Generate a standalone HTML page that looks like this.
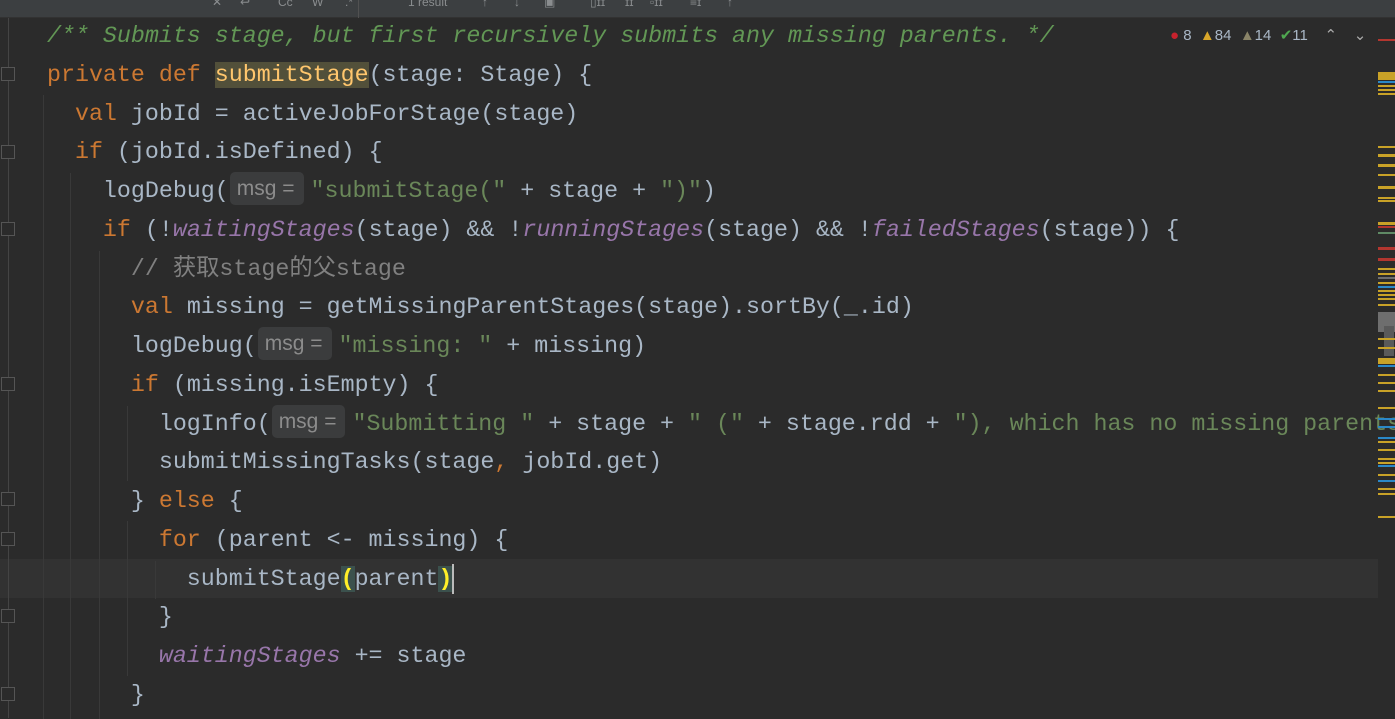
<!DOCTYPE html>
<html><head><meta charset="utf-8"><style>
*{margin:0;padding:0;box-sizing:border-box}
body{width:1395px;height:718px;background:#2b2b2b;overflow:hidden;position:relative;font-family:"Liberation Mono","Noto Sans CJK SC",monospace;font-size:23.3px;color:#a9b7c6}
.tb{position:absolute;left:0;top:0;width:1395px;height:18px;background:#3c3f41;border-bottom:1px solid #323232;color:#8a8d8f;font-family:"Liberation Sans",sans-serif;font-size:12px}
.tb span{position:absolute;top:-5px}
.l{position:absolute;left:47px;height:39px;line-height:39px;white-space:pre}
.k{color:#cc7832}.s{color:#6a8759}.c{color:#629755;font-style:italic}.lc{color:#808080}.p{color:#9876aa;font-style:italic}
.fn{color:#ffc66d;background:#52503a}
.h{display:inline-block;background:#3b3c3d;color:#8c8c8c;font-family:"Liberation Sans",sans-serif;font-size:21px;border-radius:5px;height:33px;line-height:33px;padding:0 9px 0 7px;margin:0 7px 0 1px;vertical-align:middle;position:relative;top:-2px}
.pm{background:#3b514d;color:#ffef28;font-weight:bold}
.g{position:absolute;width:1px;background:#393939}
.cur{position:absolute;left:0;top:559px;width:1378px;height:39px;background:#323232}
.st{position:absolute;left:1378px;width:17px;height:2px}
.y{background:#c9a227}.b{background:#2a88c8}.r{background:#b3362f}.gr{background:#5f8a65}.gy{background:#6e6e6e}
.fold{position:absolute;left:1px;width:14px;height:14px;border:1px solid #555;background:#2b2b2b}
</style></head><body>
<div class="tb"><span style="left:212px">✕</span><span style="left:240px">↩</span><span style="left:278px">Cc</span><span style="left:312px">W</span><span style="left:345px">.*</span><span style="left:408px">1 result</span><span style="left:482px">↑</span><span style="left:514px">↓</span><span style="left:544px">▣</span><span style="left:590px">▯ɪɪ</span><span style="left:625px">ɪɪ</span><span style="left:650px">▫ɪɪ</span><span style="left:690px">≡ɪ</span><span style="left:727px">↑</span></div>
<div style="position:absolute;left:358px;top:0;width:1px;height:18px;background:#515151"></div>
<div class="cur"></div>
<div style="position:absolute;left:8px;top:18px;width:1px;height:700px;background:#444"></div>
<div class="g" style="left:43px;top:95px;height:624px"></div>
<div class="g" style="left:70px;top:173px;height:546px"></div>
<div class="g" style="left:99px;top:251px;height:468px"></div>
<div class="g" style="left:127px;top:406px;height:75px"></div>
<div class="g" style="left:127px;top:521px;height:155px"></div>
<div class="g" style="left:155px;top:561px;height:38px"></div>
<div class="fold" style="top:67px"></div><div class="fold" style="top:145px"></div><div class="fold" style="top:222px"></div><div class="fold" style="top:377px"></div><div class="fold" style="top:492px"></div><div class="fold" style="top:532px"></div><div class="fold" style="top:609px"></div><div class="fold" style="top:687px"></div>

<div class="l" style="top:17px"><span class="c">/** Submits stage, but first recursively submits any missing parents. */</span></div>
<div class="l" style="top:56px"><span class="k">private def </span><span class="fn">submitStage</span>(stage: Stage) {</div>
<div class="l" style="top:95px">  <span class="k">val </span>jobId = activeJobForStage(stage)</div>
<div class="l" style="top:133px">  <span class="k">if </span>(jobId.isDefined) {</div>
<div class="l" style="top:172px">    logDebug(<span class="h">msg =</span><span class="s">"submitStage("</span> + stage + <span class="s">")"</span>)</div>
<div class="l" style="top:211px">    <span class="k">if </span>(!<span class="p">waitingStages</span>(stage) &amp;&amp; !<span class="p">runningStages</span>(stage) &amp;&amp; !<span class="p">failedStages</span>(stage)) {</div>
<div class="l" style="top:250px">      <span class="lc">// 获取stage的父stage</span></div>
<div class="l" style="top:288px">      <span class="k">val </span>missing = getMissingParentStages(stage).sortBy(_.id)</div>
<div class="l" style="top:327px">      logDebug(<span class="h">msg =</span><span class="s">"missing: "</span> + missing)</div>
<div class="l" style="top:366px">      <span class="k">if </span>(missing.isEmpty) {</div>
<div class="l" style="top:405px">        logInfo(<span class="h">msg =</span><span class="s">"Submitting "</span> + stage + <span class="s">" ("</span> + stage.rdd + <span class="s">"), which has no missing parents"</span>)</div>
<div class="l" style="top:443px">        submitMissingTasks(stage<span class="k">, </span>jobId.get)</div>
<div class="l" style="top:482px">      } <span class="k">else </span>{</div>
<div class="l" style="top:521px">        <span class="k">for </span>(parent &lt;- missing) {</div>
<div class="l" style="top:560px">          submitStage<span class="pm">(</span>parent<span class="pm">)</span><span style="display:inline-block;width:2px;height:30px;background:#bbb;vertical-align:middle"></span></div>
<div class="l" style="top:598px">        }</div>
<div class="l" style="top:637px">        <span class="p">waitingStages</span> += stage</div>
<div class="l" style="top:676px">      }</div>

<div style="position:absolute;left:1160px;top:18px;width:235px;height:36px;background:#2b2b2b"></div>
<div style="position:absolute;left:1170px;top:26px;font-family:'Liberation Sans',sans-serif;font-size:15px;color:#a9b7c6;white-space:pre"><span style="color:#c7222d">●</span> 8  <span style="color:#d9a72a">▲</span>84  <span style="color:#8a8468">▲</span>14  <span style="color:#4fa850">✔</span>11    <span style="color:#aaa">⌃</span>    <span style="color:#aaa">⌄</span></div>

<div class="st r" style="top:39px"></div>
<div class="st y" style="top:72px;height:8px"></div><div class="st b" style="top:81px"></div><div class="st y" style="top:85px"></div><div class="st y" style="top:89px"></div><div class="st y" style="top:93px"></div>
<div class="st y" style="top:146px"></div><div class="st y" style="top:154px;height:3px"></div><div class="st y" style="top:164px;height:3px"></div><div class="st y" style="top:174px"></div><div class="st y" style="top:186px;height:3px"></div><div class="st y" style="top:197px"></div><div class="st y" style="top:200px"></div>
<div class="st y" style="top:222px;height:3px"></div><div class="st r" style="top:226px"></div><div class="st gr" style="top:232px"></div><div class="st r" style="top:247px;height:3px"></div><div class="st r" style="top:258px;height:3px"></div>
<div class="st y" style="top:268px"></div><div class="st y" style="top:273px"></div><div class="st gy" style="top:277px"></div><div class="st y" style="top:282px"></div><div class="st b" style="top:286px"></div><div class="st y" style="top:290px"></div><div class="st y" style="top:294px"></div><div class="st y" style="top:298px"></div><div class="st y" style="top:304px"></div>
<div class="st gy" style="top:312px;height:20px"></div><div style="position:absolute;left:1384px;top:326px;width:10px;height:30px;background:#5a5a5a"></div>
<div class="st y" style="top:338px"></div><div class="st y" style="top:347px"></div><div class="st y" style="top:358px;height:6px"></div><div class="st b" style="top:365px"></div>
<div class="st y" style="top:374px"></div><div class="st y" style="top:382px"></div><div class="st y" style="top:390px"></div><div class="st y" style="top:407px"></div>
<div class="st b" style="top:418px"></div><div class="st b" style="top:426px"></div><div class="st b" style="top:437px"></div><div class="st y" style="top:441px"></div><div class="st y" style="top:449px"></div>
<div class="st y" style="top:458px"></div><div class="st y" style="top:462px"></div><div class="st b" style="top:465px"></div><div class="st y" style="top:474px"></div><div class="st b" style="top:480px"></div><div class="st y" style="top:488px"></div><div class="st y" style="top:493px"></div><div class="st y" style="top:516px"></div>
</body></html>
